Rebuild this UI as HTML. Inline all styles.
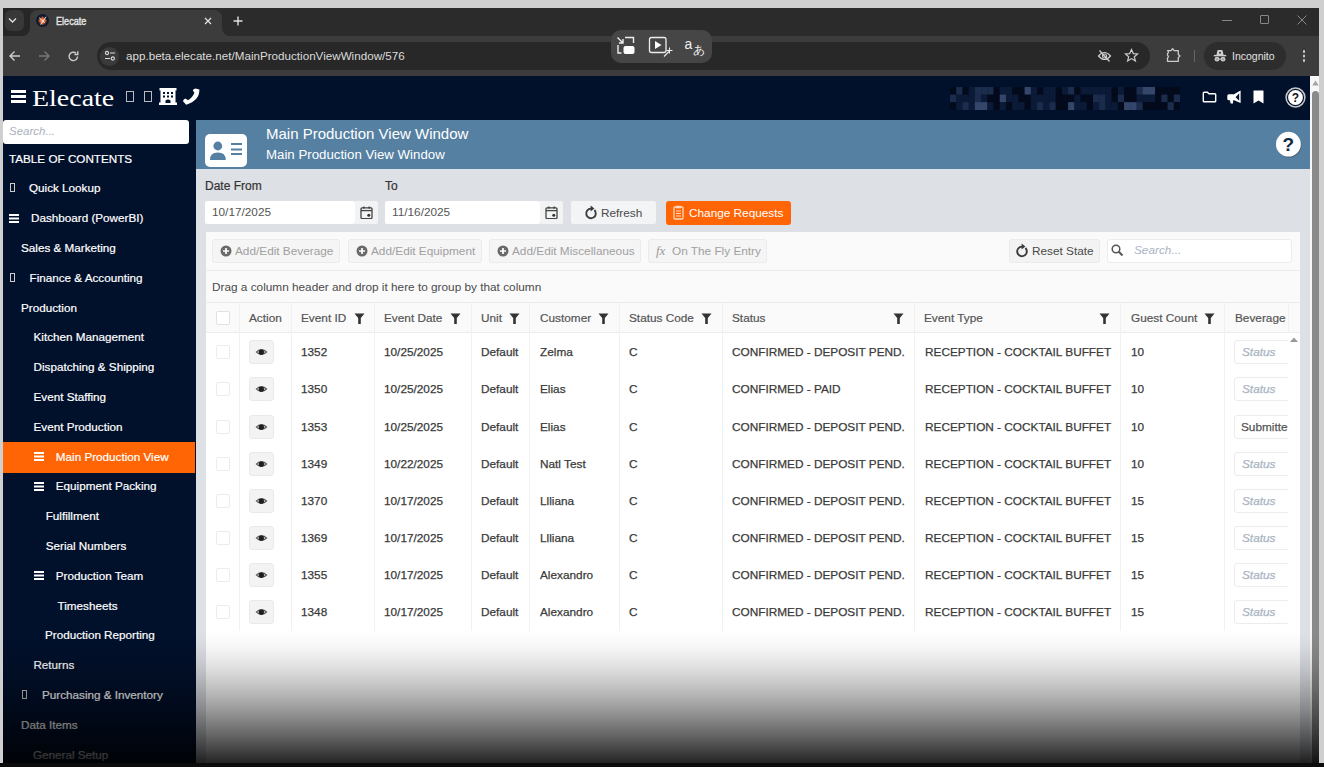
<!DOCTYPE html><html><head><meta charset="utf-8"><style>
*{box-sizing:border-box;margin:0;padding:0}
html,body{width:1324px;height:767px;overflow:hidden;background:#cfcfcf;font-family:"Liberation Sans",sans-serif}
.a{position:absolute}
.t{position:absolute;white-space:nowrap;line-height:1}
.ctext{color:#e3e3e3}
.si{position:absolute;white-space:nowrap;color:#fff;font-size:11.7px;line-height:14px;-webkit-text-stroke:0.2px currentColor}
.btn{position:absolute;background:#f5f5f5;border:1px solid #ebebeb;border-radius:3px;color:#a0a0a0;font-size:11.8px;white-space:nowrap}
.th{position:absolute;top:303px;height:30px;line-height:30px;font-size:11.8px;color:#555;white-space:nowrap;-webkit-text-stroke:0.2px currentColor}
.cell{position:absolute;font-size:11.8px;color:#3a3a3a;white-space:nowrap;line-height:14px;-webkit-text-stroke:0.25px currentColor}
.vl{position:absolute;width:1px;background:#f1f1f1}
#fade{left:3px;top:0;width:1316px;height:763px;pointer-events:none;background:linear-gradient(to bottom,rgba(0,0,0,0) 0px,rgba(0,0,0,0.000) 631.0px,rgba(0,0,0,0.027) 644.2px,rgba(0,0,0,0.077) 657.4px,rgba(0,0,0,0.141) 670.6px,rgba(0,0,0,0.218) 683.8px,rgba(0,0,0,0.304) 697.0px,rgba(0,0,0,0.400) 710.2px,rgba(0,0,0,0.504) 723.4px,rgba(0,0,0,0.615) 736.6px,rgba(0,0,0,0.734) 749.8px,rgba(0,0,0,0.860) 763.0px)}
</style></head><body>
<div class="a" style="left:3px;top:8px;width:1316px;height:28px;background:#2b2b2b"></div>
<div class="a" style="left:3px;top:8px;width:27px;height:28px;background:#262626;border-radius:0 0 8px 0"></div>
<div class="a" style="left:22px;top:28px;width:208px;height:8px;background:#3c3c3c"></div>
<div class="a" style="left:14px;top:20px;width:16px;height:16px;background:#262626;border-radius:0 0 8px 0"></div>
<div class="a" style="left:222px;top:20px;width:16px;height:16px;background:#2b2b2b;border-radius:0 0 0 8px"></div>
<div class="a" style="left:5px;top:10px;width:19px;height:21px;background:#383838;border-radius:6px"></div>
<svg class="a" style="left:7px;top:16px" width="11" height="8" viewBox="0 0 11 8"><path d="M2 2.5 L5.5 6 L9 2.5" stroke="#ddd" stroke-width="1.4" fill="none"/></svg>
<div class="a" style="left:30px;top:10px;width:192px;height:26px;background:#3c3c3c;border-radius:8px 8px 0 0"></div>
<svg class="a" style="left:36px;top:14px" width="13" height="13" viewBox="0 0 13 13"><defs><radialGradient id="fv"><stop offset="0" stop-color="#ffd0b0"/><stop offset="0.5" stop-color="#d8602a"/><stop offset="1" stop-color="#6a2010" stop-opacity="0"/></radialGradient></defs><circle cx="6.5" cy="6.5" r="6.5" fill="#0c1a30"/><circle cx="6.5" cy="6.8" r="5" fill="url(#fv)"/><path d="M6.5 1.8 L7.4 5.6 L11.2 6.8 L7.4 8 L6.5 11.8 L5.6 8 L1.8 6.8 L5.6 5.6 Z" fill="#e07040" opacity="0.8"/><path d="M10 2.8 L4.6 10.6 M3.2 3.8 L8.6 8.6" stroke="#eaf0ff" stroke-width="0.9"/></svg>
<div class="t ctext" style="left:56px;top:17px;font-size:10px;color:#e8e8e8;transform:scaleX(0.91);transform-origin:0 0;-webkit-text-stroke:0.35px currentColor">Elecate</div>
<svg class="a" style="left:204px;top:16.5px" width="8" height="8" viewBox="0 0 8 8"><path d="M1 1 L7 7 M7 1 L1 7" stroke="#e0e0e0" stroke-width="1.3"/></svg>
<svg class="a" style="left:233px;top:15.5px" width="10" height="10" viewBox="0 0 10 10"><path d="M5 0.5 V9.5 M0.5 5 H9.5" stroke="#e0e0e0" stroke-width="1.4"/></svg>
<div class="a" style="left:1222px;top:20px;width:10px;height:1px;background:#888"></div>
<div class="a" style="left:1260px;top:15px;width:9px;height:9px;border:1px solid #888;border-radius:1px"></div>
<svg class="a" style="left:1297px;top:15px" width="10" height="10" viewBox="0 0 10 10"><path d="M0.5 0.5 L9.5 9.5 M9.5 0.5 L0.5 9.5" stroke="#888" stroke-width="1"/></svg>
<div class="a" style="left:3px;top:36px;width:1316px;height:40px;background:#3c3c3c"></div>
<svg class="a" style="left:8px;top:50px" width="13" height="12" viewBox="0 0 13 12"><path d="M12 6 H2 M6.5 1.5 L2 6 L6.5 10.5" stroke="#ccc" stroke-width="1.4" fill="none"/></svg>
<svg class="a" style="left:38px;top:50px" width="13" height="12" viewBox="0 0 13 12"><path d="M1 6 H11 M6.5 1.5 L11 6 L6.5 10.5" stroke="#777" stroke-width="1.4" fill="none"/></svg>
<svg class="a" style="left:67px;top:50px" width="13" height="13" viewBox="0 0 13 13"><path d="M10.5 6.5 A4.2 4.2 0 1 1 9.2 3.4" stroke="#ccc" stroke-width="1.4" fill="none"/><path d="M10.8 1.2 V4.6 H7.4" stroke="#ccc" stroke-width="1.4" fill="none"/></svg>
<div class="a" style="left:97px;top:42px;width:1053px;height:28px;background:#282828;border-radius:14px"></div>
<div class="a" style="left:100px;top:46.5px;width:19px;height:19px;background:#3a3a3a;border-radius:10px"></div>
<svg class="a" style="left:104px;top:50px" width="12" height="12" viewBox="0 0 12 12"><path d="M6 3 H11 M1 8.5 H6" stroke="#ddd" stroke-width="1.2"/><circle cx="3" cy="3" r="1.6" stroke="#ddd" fill="none" stroke-width="1.1"/><circle cx="8.8" cy="8.5" r="1.6" stroke="#ddd" fill="none" stroke-width="1.1"/></svg>
<div class="t" style="left:126px;top:50px;font-size:11.65px;color:#dcdcdc">app.beta.elecate.net/MainProductionViewWindow/576</div>
<svg class="a" style="left:1097px;top:49px" width="15" height="14" viewBox="0 0 15 14"><path d="M1.5 7 Q7.5 0 13.5 7 Q7.5 14 1.5 7 Z" stroke="#ccc" stroke-width="1.2" fill="none"/><circle cx="7.5" cy="7" r="2" stroke="#ccc" stroke-width="1.2" fill="none"/><path d="M2.5 1.5 L12.5 12.5" stroke="#ccc" stroke-width="1.3"/></svg>
<svg class="a" style="left:1124px;top:48px" width="15" height="15" viewBox="0 0 15 15"><path d="M7.5 1.5 L9.3 5.6 L13.6 5.9 L10.3 8.7 L11.4 13 L7.5 10.6 L3.6 13 L4.7 8.7 L1.4 5.9 L5.7 5.6 Z" stroke="#ccc" stroke-width="1.2" fill="none"/></svg>
<svg class="a" style="left:1165px;top:47px" width="17" height="17" viewBox="0 0 17 17"><path d="M2.5 3.6 H6 L7.6 1.6 L9.2 3.6 H13.3 V7.4 L15 8.9 L13.3 10.4 V14.3 H2.5 V11 Q4.3 9.6 2.5 8.2 V6.6 Q4.3 5.2 2.5 3.6 Z" stroke="#ccc" stroke-width="1.3" fill="none" stroke-linejoin="round"/></svg>
<div class="a" style="left:1194px;top:50px;width:1px;height:12px;background:#666"></div>
<div class="a" style="left:1204px;top:42px;width:82px;height:28px;background:#2d2d2d;border-radius:14px"></div>
<svg class="a" style="left:1213px;top:49px" width="14" height="14" viewBox="0 0 14 14"><path d="M3.4 6.2 L4.4 1.6 Q4.6 1 5.3 1 H8.7 Q9.4 1 9.6 1.6 L10.6 6.2 Z" fill="#d0d0d0"/><circle cx="7" cy="3.8" r="1" fill="#3a3a3a"/><path d="M0.8 6.6 H13.2" stroke="#d0d0d0" stroke-width="1.4"/><circle cx="4" cy="10.2" r="2.4" fill="#c8c8c8"/><circle cx="10" cy="10.2" r="2.4" fill="#c8c8c8"/><path d="M6 10 H8" stroke="#c8c8c8" stroke-width="1.2"/><circle cx="4" cy="10.2" r="1" fill="#9a9a9a"/><circle cx="10" cy="10.2" r="1" fill="#9a9a9a"/></svg>
<div class="t ctext" style="left:1232px;top:51px;font-size:10.5px">Incognito</div>
<div class="a" style="left:1302.5px;top:50px;width:2.5px;height:2.5px;border-radius:2px;background:#ccc;box-shadow:0 4.5px 0 #ccc,0 9px 0 #ccc"></div>
<div class="a" style="left:611px;top:30px;width:101px;height:33px;background:#464646;border-radius:10px"></div>
<svg class="a" style="left:611px;top:30px" width="101" height="33" viewBox="0 0 101 33"><path d="M6.5 7.5 L12 13 M12 9 V13 H8" stroke="#eee" stroke-width="1.4" fill="none"/><path d="M14 7.5 H22.5 V13" stroke="#eee" stroke-width="1.4" fill="none"/><path d="M7 15 V23 H10.5" stroke="#eee" stroke-width="1.4" fill="none"/><rect x="12.5" y="16" width="11" height="8" rx="2" fill="#fff"/><rect x="38.5" y="7.5" width="16.5" height="15" rx="2" stroke="#eee" stroke-width="1.3" fill="none"/><path d="M44 11 V19 L50.5 15 Z" fill="#fff"/><path d="M53 26.5 L58 21.5" stroke="#eee" stroke-width="1.1"/><path d="M58.5 17.5 V23.5 M55.5 20.5 H61.5" stroke="#eee" stroke-width="1" fill="none"/><text x="73.5" y="18.5" font-family="Liberation Sans" font-size="14" fill="#eee">a</text><text x="82" y="24" font-family="Liberation Sans" font-size="12" fill="#eee">あ</text></svg>
<div class="a" style="left:3px;top:76px;width:1307px;height:44px;background:#01102b"></div>
<div class="a" style="left:11px;top:90px;width:15px;height:2.5px;background:#fff;box-shadow:0 5px 0 #fff,0 10px 0 #fff"></div>
<div class="t" style="left:32px;top:86px;font-family:'Liberation Serif',serif;font-size:24px;line-height:25px;color:#fff;transform:scaleX(1.165);transform-origin:0 0">Elecate</div>
<div class="a" style="left:126px;top:91px;width:8px;height:11px;border:1px solid #bbb"></div>
<div class="a" style="left:144px;top:91px;width:8px;height:11px;border:1px solid #bbb"></div>
<svg class="a" style="left:159px;top:88px" width="18" height="17" viewBox="0 0 18 17"><rect x="0.5" y="0" width="17" height="2.5" fill="#fff"/><rect x="1.5" y="2" width="15" height="13" fill="#fff"/><rect x="0" y="14.5" width="18" height="2.5" fill="#fff"/><rect x="4" y="4" width="2" height="2" fill="#01102b"/><rect x="8" y="4" width="2" height="2" fill="#01102b"/><rect x="12" y="4" width="2" height="2" fill="#01102b"/><rect x="4" y="7.5" width="2" height="2" fill="#01102b"/><rect x="8" y="7.5" width="2" height="2" fill="#01102b"/><rect x="12" y="7.5" width="2" height="2" fill="#01102b"/><path d="M6.5 15 V12.5 Q9 10.5 11.5 12.5 V15 Z" fill="#01102b"/></svg>
<svg class="a" style="left:182px;top:88px" width="18" height="17" viewBox="0 0 18 17"><path d="M1 13.2 Q1.2 11.2 3.5 10.6 L6 12.3 Q10.6 9.6 12.4 4.8 L10.8 2.6 Q11.2 0.6 13.4 0.4 L17.4 1.6 Q17.6 12.6 4.2 16.8 Z" fill="#fff"/></svg>
<svg class="a" style="left:949.5px;top:86.6px" width="230" height="23" viewBox="0 0 230 23"><rect x="0.00" y="0.00" width="6.52" height="7.9" fill="#030a1c"/><rect x="6.22" y="0.00" width="6.52" height="7.9" fill="#1c2c4c"/><rect x="12.43" y="0.00" width="6.52" height="7.9" fill="#030a1c"/><rect x="18.65" y="0.00" width="6.52" height="7.9" fill="#0b1a36"/><rect x="24.86" y="0.00" width="6.52" height="7.9" fill="#1c2c4c"/><rect x="31.08" y="0.00" width="6.52" height="7.9" fill="#1c2c4c"/><rect x="37.30" y="0.00" width="6.52" height="7.9" fill="#1c2c4c"/><rect x="43.51" y="0.00" width="6.52" height="7.9" fill="#030a1c"/><rect x="49.73" y="0.00" width="6.52" height="7.9" fill="#0b1a36"/><rect x="55.95" y="0.00" width="6.52" height="7.9" fill="#0b1a36"/><rect x="62.16" y="0.00" width="6.52" height="7.9" fill="#030a1c"/><rect x="68.38" y="0.00" width="6.52" height="7.9" fill="#030a1c"/><rect x="74.59" y="0.00" width="6.52" height="7.9" fill="#34476a"/><rect x="80.81" y="0.00" width="6.52" height="7.9" fill="#0b1a36"/><rect x="87.03" y="0.00" width="6.52" height="7.9" fill="#030a1c"/><rect x="93.24" y="0.00" width="6.52" height="7.9" fill="#0b1a36"/><rect x="99.46" y="0.00" width="6.52" height="7.9" fill="#0b1a36"/><rect x="105.68" y="0.00" width="6.52" height="7.9" fill="#030a1c"/><rect x="111.89" y="0.00" width="6.52" height="7.9" fill="#0b1a36"/><rect x="118.11" y="0.00" width="6.52" height="7.9" fill="#1c2c4c"/><rect x="124.32" y="0.00" width="6.52" height="7.9" fill="#030a1c"/><rect x="130.54" y="0.00" width="6.52" height="7.9" fill="#0b1a36"/><rect x="136.76" y="0.00" width="6.52" height="7.9" fill="#0b1a36"/><rect x="142.97" y="0.00" width="6.52" height="7.9" fill="#0b1a36"/><rect x="149.19" y="0.00" width="6.52" height="7.9" fill="#0b1a36"/><rect x="155.41" y="0.00" width="6.52" height="7.9" fill="#0b1a36"/><rect x="161.62" y="0.00" width="6.52" height="7.9" fill="#030a1c"/><rect x="167.84" y="0.00" width="6.52" height="7.9" fill="#0b1a36"/><rect x="174.05" y="0.00" width="6.52" height="7.9" fill="#030a1c"/><rect x="180.27" y="0.00" width="6.52" height="7.9" fill="#030a1c"/><rect x="186.49" y="0.00" width="6.52" height="7.9" fill="#1c2c4c"/><rect x="192.70" y="0.00" width="6.52" height="7.9" fill="#34476a"/><rect x="198.92" y="0.00" width="6.52" height="7.9" fill="#34476a"/><rect x="205.14" y="0.00" width="6.52" height="7.9" fill="#030a1c"/><rect x="211.35" y="0.00" width="6.52" height="7.9" fill="#030a1c"/><rect x="217.57" y="0.00" width="6.52" height="7.9" fill="#030a1c"/><rect x="223.78" y="0.00" width="6.52" height="7.9" fill="#030a1c"/><rect x="0.00" y="7.57" width="6.52" height="7.9" fill="#1c2c4c"/><rect x="6.22" y="7.57" width="6.52" height="7.9" fill="#0b1a36"/><rect x="12.43" y="7.57" width="6.52" height="7.9" fill="#0b1a36"/><rect x="18.65" y="7.57" width="6.52" height="7.9" fill="#0b1a36"/><rect x="24.86" y="7.57" width="6.52" height="7.9" fill="#1c2c4c"/><rect x="31.08" y="7.57" width="6.52" height="7.9" fill="#0b1a36"/><rect x="37.30" y="7.57" width="6.52" height="7.9" fill="#030a1c"/><rect x="43.51" y="7.57" width="6.52" height="7.9" fill="#030a1c"/><rect x="49.73" y="7.57" width="6.52" height="7.9" fill="#34476a"/><rect x="55.95" y="7.57" width="6.52" height="7.9" fill="#0b1a36"/><rect x="62.16" y="7.57" width="6.52" height="7.9" fill="#0b1a36"/><rect x="68.38" y="7.57" width="6.52" height="7.9" fill="#030a1c"/><rect x="74.59" y="7.57" width="6.52" height="7.9" fill="#030a1c"/><rect x="80.81" y="7.57" width="6.52" height="7.9" fill="#0b1a36"/><rect x="87.03" y="7.57" width="6.52" height="7.9" fill="#0b1a36"/><rect x="93.24" y="7.57" width="6.52" height="7.9" fill="#0b1a36"/><rect x="99.46" y="7.57" width="6.52" height="7.9" fill="#0b1a36"/><rect x="105.68" y="7.57" width="6.52" height="7.9" fill="#030a1c"/><rect x="111.89" y="7.57" width="6.52" height="7.9" fill="#030a1c"/><rect x="118.11" y="7.57" width="6.52" height="7.9" fill="#030a1c"/><rect x="124.32" y="7.57" width="6.52" height="7.9" fill="#0b1a36"/><rect x="130.54" y="7.57" width="6.52" height="7.9" fill="#030a1c"/><rect x="136.76" y="7.57" width="6.52" height="7.9" fill="#030a1c"/><rect x="142.97" y="7.57" width="6.52" height="7.9" fill="#1c2c4c"/><rect x="149.19" y="7.57" width="6.52" height="7.9" fill="#1c2c4c"/><rect x="155.41" y="7.57" width="6.52" height="7.9" fill="#0b1a36"/><rect x="161.62" y="7.57" width="6.52" height="7.9" fill="#030a1c"/><rect x="167.84" y="7.57" width="6.52" height="7.9" fill="#1c2c4c"/><rect x="174.05" y="7.57" width="6.52" height="7.9" fill="#030a1c"/><rect x="180.27" y="7.57" width="6.52" height="7.9" fill="#030a1c"/><rect x="186.49" y="7.57" width="6.52" height="7.9" fill="#0b1a36"/><rect x="192.70" y="7.57" width="6.52" height="7.9" fill="#0b1a36"/><rect x="198.92" y="7.57" width="6.52" height="7.9" fill="#0b1a36"/><rect x="205.14" y="7.57" width="6.52" height="7.9" fill="#030a1c"/><rect x="211.35" y="7.57" width="6.52" height="7.9" fill="#1c2c4c"/><rect x="217.57" y="7.57" width="6.52" height="7.9" fill="#030a1c"/><rect x="223.78" y="7.57" width="6.52" height="7.9" fill="#1c2c4c"/><rect x="0.00" y="15.14" width="6.52" height="7.9" fill="#030a1c"/><rect x="6.22" y="15.14" width="6.52" height="7.9" fill="#0b1a36"/><rect x="12.43" y="15.14" width="6.52" height="7.9" fill="#1c2c4c"/><rect x="18.65" y="15.14" width="6.52" height="7.9" fill="#0b1a36"/><rect x="24.86" y="15.14" width="6.52" height="7.9" fill="#34476a"/><rect x="31.08" y="15.14" width="6.52" height="7.9" fill="#34476a"/><rect x="37.30" y="15.14" width="6.52" height="7.9" fill="#0b1a36"/><rect x="43.51" y="15.14" width="6.52" height="7.9" fill="#030a1c"/><rect x="49.73" y="15.14" width="6.52" height="7.9" fill="#0b1a36"/><rect x="55.95" y="15.14" width="6.52" height="7.9" fill="#030a1c"/><rect x="62.16" y="15.14" width="6.52" height="7.9" fill="#0b1a36"/><rect x="68.38" y="15.14" width="6.52" height="7.9" fill="#0b1a36"/><rect x="74.59" y="15.14" width="6.52" height="7.9" fill="#030a1c"/><rect x="80.81" y="15.14" width="6.52" height="7.9" fill="#0b1a36"/><rect x="87.03" y="15.14" width="6.52" height="7.9" fill="#1c2c4c"/><rect x="93.24" y="15.14" width="6.52" height="7.9" fill="#0b1a36"/><rect x="99.46" y="15.14" width="6.52" height="7.9" fill="#1c2c4c"/><rect x="105.68" y="15.14" width="6.52" height="7.9" fill="#030a1c"/><rect x="111.89" y="15.14" width="6.52" height="7.9" fill="#030a1c"/><rect x="118.11" y="15.14" width="6.52" height="7.9" fill="#34476a"/><rect x="124.32" y="15.14" width="6.52" height="7.9" fill="#0b1a36"/><rect x="130.54" y="15.14" width="6.52" height="7.9" fill="#0b1a36"/><rect x="136.76" y="15.14" width="6.52" height="7.9" fill="#030a1c"/><rect x="142.97" y="15.14" width="6.52" height="7.9" fill="#0b1a36"/><rect x="149.19" y="15.14" width="6.52" height="7.9" fill="#1c2c4c"/><rect x="155.41" y="15.14" width="6.52" height="7.9" fill="#0b1a36"/><rect x="161.62" y="15.14" width="6.52" height="7.9" fill="#0b1a36"/><rect x="167.84" y="15.14" width="6.52" height="7.9" fill="#030a1c"/><rect x="174.05" y="15.14" width="6.52" height="7.9" fill="#34476a"/><rect x="180.27" y="15.14" width="6.52" height="7.9" fill="#34476a"/><rect x="186.49" y="15.14" width="6.52" height="7.9" fill="#1c2c4c"/><rect x="192.70" y="15.14" width="6.52" height="7.9" fill="#030a1c"/><rect x="198.92" y="15.14" width="6.52" height="7.9" fill="#030a1c"/><rect x="205.14" y="15.14" width="6.52" height="7.9" fill="#030a1c"/><rect x="211.35" y="15.14" width="6.52" height="7.9" fill="#030a1c"/><rect x="217.57" y="15.14" width="6.52" height="7.9" fill="#1c2c4c"/><rect x="223.78" y="15.14" width="6.52" height="7.9" fill="#030a1c"/></svg>
<svg class="a" style="left:1201.5px;top:91px" width="15" height="12" viewBox="0 0 15 12"><path d="M1.3 2 Q1.3 1.2 2.1 1.2 H5.4 L6.9 2.7 H12.9 Q13.7 2.7 13.7 3.5 V10 Q13.7 10.8 12.9 10.8 H2.1 Q1.3 10.8 1.3 10 Z" stroke="#fff" stroke-width="1.4" fill="none"/></svg>
<svg class="a" style="left:1227px;top:90px" width="15" height="14" viewBox="0 0 15 14"><rect x="0.3" y="4.2" width="7.5" height="6" rx="1.5" fill="#fff"/><path d="M2.8 9.5 H6.2 L6 13.4 H3.6 Z" fill="#fff"/><path d="M7 4.2 L13.6 0.6 V13 L7 10.2 Z" fill="#fff"/><path d="M8.6 7.2 L12.2 3.2 V10.8 Z" fill="#01102b"/></svg>
<svg class="a" style="left:1253px;top:90px" width="11" height="14" viewBox="0 0 11 14"><path d="M0.5 0.8 Q0.5 0.4 1 0.4 H10 Q10.5 0.4 10.5 0.8 V13.5 L5.5 10.6 L0.5 13.5 Z" fill="#fff"/></svg>
<svg class="a" style="left:1285px;top:86.5px" width="21" height="21" viewBox="0 0 21 21"><circle cx="10.5" cy="10.5" r="9.4" stroke="#c8c8c8" stroke-width="1.5" fill="#01102b"/><circle cx="10.5" cy="10.5" r="7.4" fill="#fff"/><text x="10.5" y="14.8" text-anchor="middle" font-family="Liberation Sans" font-weight="bold" font-size="12" fill="#111">?</text></svg>
<div class="a" style="left:1310px;top:76px;width:9px;height:687px;background:#f7f7f7"></div>
<svg class="a" style="left:1311px;top:78px" width="9" height="9" viewBox="0 0 9 9"><path d="M1.3 7.5 L4.5 2.5 L7.7 7.5 Z" fill="#a3a3a3"/></svg>
<div class="a" style="left:1312px;top:90.5px;width:7px;height:680px;background:#8a8a8a;border-radius:3.5px"></div>
<div class="a" style="left:3px;top:120px;width:193px;height:643px;background:#01102b"></div>
<div class="a" style="left:3px;top:120px;width:186px;height:24px;background:#fff;border-radius:3px"></div>
<div class="t" style="left:9px;top:126px;font-size:11.5px;font-style:italic;color:#a9b1bd">Search...</div>
<div class="si" style="left:9px;top:152px">TABLE OF CONTENTS</div>
<div class="a" style="left:3px;top:442px;width:191.5px;height:30.5px;background:#ff6505"></div>
<div class="si" style="left:29px;top:181.3px">Quick Lookup</div>
<div class="a" style="left:10px;top:183px;width:5px;height:9px;border:1px solid #ccc"></div>
<div class="si" style="left:31px;top:211.1px">Dashboard (PowerBI)</div>
<div class="a" style="left:9px;top:214px;width:10px;height:2px;background:#fff;box-shadow:0 3.5px 0 #fff,0 7px 0 #fff"></div>
<div class="si" style="left:21px;top:240.9px">Sales &amp; Marketing</div>
<div class="si" style="left:29.5px;top:270.7px">Finance &amp; Accounting</div>
<div class="a" style="left:10px;top:273px;width:5px;height:9px;border:1px solid #ccc"></div>
<div class="si" style="left:21px;top:300.5px">Production</div>
<div class="si" style="left:33.5px;top:330.3px">Kitchen Management</div>
<div class="si" style="left:33.5px;top:360.1px">Dispatching &amp; Shipping</div>
<div class="si" style="left:33.5px;top:389.9px">Event Staffing</div>
<div class="si" style="left:33.5px;top:419.7px">Event Production</div>
<div class="si" style="left:55.8px;top:449.5px">Main Production View</div>
<div class="a" style="left:33.5px;top:452px;width:10px;height:2px;background:#fff;box-shadow:0 3.5px 0 #fff,0 7px 0 #fff"></div>
<div class="si" style="left:55.8px;top:479.3px">Equipment Packing</div>
<div class="a" style="left:33.5px;top:482px;width:10px;height:2px;background:#fff;box-shadow:0 3.5px 0 #fff,0 7px 0 #fff"></div>
<div class="si" style="left:45.7px;top:509.1px">Fulfillment</div>
<div class="si" style="left:45.7px;top:538.9px">Serial Numbers</div>
<div class="si" style="left:55.8px;top:568.7px">Production Team</div>
<div class="a" style="left:33.5px;top:571px;width:10px;height:2px;background:#fff;box-shadow:0 3.5px 0 #fff,0 7px 0 #fff"></div>
<div class="si" style="left:57.5px;top:598.5px">Timesheets</div>
<div class="si" style="left:45px;top:628.3px">Production Reporting</div>
<div class="si" style="left:33.4px;top:658.1px">Returns</div>
<div class="si" style="left:42px;top:687.9px">Purchasing &amp; Inventory</div>
<div class="a" style="left:22px;top:690px;width:5px;height:9px;border:1px solid #ccc"></div>
<div class="si" style="left:21px;top:717.7px">Data Items</div>
<div class="si" style="left:33px;top:747.5px">General Setup</div>
<div class="a" style="left:196px;top:120px;width:1114px;height:643px;background:#dde0e5"></div>
<div class="a" style="left:196px;top:120px;width:1114px;height:49px;background:#5580a2"></div>
<div class="a" style="left:205px;top:134px;width:42px;height:33px;background:#fff;border-radius:5px"></div>
<svg class="a" style="left:205px;top:134px" width="42" height="33" viewBox="0 0 42 33"><circle cx="12.8" cy="12" r="4.4" fill="#5580a2"/><path d="M5 26 Q5 18.6 12.8 18.6 Q20.8 18.6 20.8 26 Z" fill="#5580a2"/><rect x="26" y="9" width="11" height="2" fill="#5580a2"/><rect x="26" y="14.5" width="11" height="2" fill="#5580a2"/><rect x="26" y="19" width="11" height="2" fill="#5580a2"/></svg>
<div class="t" style="left:266px;top:126px;font-size:15px;color:#fff">Main Production View Window</div>
<div class="t" style="left:266px;top:148px;font-size:13.25px;color:#fff">Main Production View Window</div>
<svg class="a" style="left:1275px;top:131px" width="28" height="28" viewBox="0 0 28 28"><circle cx="14.2" cy="14.2" r="12.3" fill="#3a4a58" opacity="0.5"/><circle cx="13.4" cy="13.2" r="12.4" fill="#fff"/><text x="13.4" y="20" text-anchor="middle" font-family="Liberation Sans" font-weight="bold" font-size="19" fill="#0e2a47">?</text></svg>
<div class="t" style="left:205px;top:180px;font-size:12px;color:#333;-webkit-text-stroke:0.2px currentColor">Date From</div>
<div class="t" style="left:385px;top:180px;font-size:12px;color:#333;-webkit-text-stroke:0.2px currentColor">To</div>
<div class="a" style="left:205px;top:201px;width:150px;height:23px;background:#fff;border-radius:2px"></div>
<div class="a" style="left:355px;top:201px;width:23px;height:23px;background:#f2f3f4;border-radius:0 2px 2px 0"></div>
<svg class="a" style="left:360px;top:206px" width="13" height="13" viewBox="0 0 13 13"><rect x="1" y="1.8" width="11" height="10.8" rx="1" stroke="#444" stroke-width="1.3" fill="none"/><path d="M1 4.6 H12" stroke="#444" stroke-width="1.3"/><circle cx="3.8" cy="1.6" r="1.1" fill="#444"/><circle cx="9.2" cy="1.6" r="1.1" fill="#444"/><circle cx="8.8" cy="9.2" r="1.5" fill="#333"/></svg>
<div class="t" style="left:212px;top:207px;font-size:11.8px;color:#555">10/17/2025</div>
<div class="a" style="left:385px;top:201px;width:155px;height:23px;background:#fff;border-radius:2px"></div>
<div class="a" style="left:540px;top:201px;width:23px;height:23px;background:#f2f3f4;border-radius:0 2px 2px 0"></div>
<svg class="a" style="left:545px;top:206px" width="13" height="13" viewBox="0 0 13 13"><rect x="1" y="1.8" width="11" height="10.8" rx="1" stroke="#444" stroke-width="1.3" fill="none"/><path d="M1 4.6 H12" stroke="#444" stroke-width="1.3"/><circle cx="3.8" cy="1.6" r="1.1" fill="#444"/><circle cx="9.2" cy="1.6" r="1.1" fill="#444"/><circle cx="8.8" cy="9.2" r="1.5" fill="#333"/></svg>
<div class="t" style="left:392px;top:207px;font-size:11.8px;color:#555">11/16/2025</div>
<div class="a" style="left:571px;top:201px;width:85px;height:23px;background:#f3f4f5;border-radius:2px"></div>
<svg class="a" style="left:584px;top:205px" width="14" height="15" viewBox="0 0 14 15"><path d="M10.4 5 A4.8 4.8 0 1 1 7 3.6" stroke="#3a3a3a" stroke-width="1.9" fill="none"/><path d="M6.6 0.6 L10.4 3.6 L6.6 6.6 Z" fill="#3a3a3a"/></svg>
<div class="t" style="left:601px;top:208px;font-size:11.8px;color:#4a4a4a">Refresh</div>
<div class="a" style="left:666px;top:201px;width:125px;height:24px;background:#ff6505;border-radius:3px"></div>
<svg class="a" style="left:673px;top:205px" width="11" height="15" viewBox="0 0 11 15"><rect x="1" y="2" width="9" height="12" rx="1" stroke="#ffd9bf" stroke-width="1.3" fill="none"/><rect x="3" y="0.8" width="5" height="2.5" fill="#ffd9bf"/><path d="M3 6 H8 M3 8.5 H8 M3 11 H8" stroke="#ffd9bf" stroke-width="1"/></svg>
<div class="t" style="left:689px;top:208px;font-size:11.8px;color:#fff">Change Requests</div>
<div class="a" style="left:206px;top:232px;width:1094px;height:531px;background:#fff"></div>
<div class="a" style="left:206px;top:232px;width:1094px;height:39px;background:#fafafa;border-bottom:1px solid #ececec"></div>
<div class="a" style="left:206px;top:271px;width:1094px;height:32px;background:#fafafa;border-bottom:1px solid #ececec"></div>
<div class="btn" style="left:212px;top:239px;width:128px;height:24px"></div>
<svg class="a" style="left:220px;top:245px" width="12" height="12" viewBox="0 0 12 12"><circle cx="6" cy="6" r="5.5" fill="#6a6a6a"/><path d="M6 3 V9 M3 6 H9" stroke="#fff" stroke-width="1.7"/></svg>
<div class="t" style="left:235px;top:246px;font-size:11.8px;color:#a0a0a0">Add/Edit Beverage</div>
<div class="btn" style="left:348px;top:239px;width:134px;height:24px"></div>
<svg class="a" style="left:356px;top:245px" width="12" height="12" viewBox="0 0 12 12"><circle cx="6" cy="6" r="5.5" fill="#6a6a6a"/><path d="M6 3 V9 M3 6 H9" stroke="#fff" stroke-width="1.7"/></svg>
<div class="t" style="left:371px;top:246px;font-size:11.8px;color:#a0a0a0">Add/Edit Equipment</div>
<div class="btn" style="left:489px;top:239px;width:152px;height:24px"></div>
<svg class="a" style="left:497px;top:245px" width="12" height="12" viewBox="0 0 12 12"><circle cx="6" cy="6" r="5.5" fill="#6a6a6a"/><path d="M6 3 V9 M3 6 H9" stroke="#fff" stroke-width="1.7"/></svg>
<div class="t" style="left:512px;top:246px;font-size:11.8px;color:#a0a0a0">Add/Edit Miscellaneous</div>
<div class="btn" style="left:648px;top:239px;width:119px;height:24px"></div>
<div class="t" style="left:656px;top:244px;font-size:13px;font-family:'Liberation Serif',serif;font-style:italic;color:#999">fx</div>
<div class="t" style="left:672px;top:246px;font-size:11.8px;color:#a0a0a0">On The Fly Entry</div>
<div class="btn" style="left:1009px;top:239px;width:91px;height:24px;background:#f3f3f3"></div>
<svg class="a" style="left:1015px;top:243px" width="14" height="15" viewBox="0 0 14 15"><path d="M10.4 5 A4.8 4.8 0 1 1 7 3.6" stroke="#3a3a3a" stroke-width="1.9" fill="none"/><path d="M6.6 0.6 L10.4 3.6 L6.6 6.6 Z" fill="#3a3a3a"/></svg>
<div class="t" style="left:1032px;top:245.5px;font-size:11.8px;color:#4a4a4a">Reset State</div>
<div class="a" style="left:1107px;top:239px;width:185px;height:24px;background:#fff;border:1px solid #ececec;border-radius:3px"></div>
<svg class="a" style="left:1111px;top:244px" width="13" height="13" viewBox="0 0 13 13"><circle cx="5" cy="5" r="3.8" stroke="#555" stroke-width="1.5" fill="none"/><path d="M7.8 7.8 L11.5 11.5" stroke="#555" stroke-width="2"/></svg>
<div class="t" style="left:1134px;top:245px;font-size:11.8px;font-style:italic;color:#a9b4c2">Search...</div>
<div class="t" style="left:212px;top:281.5px;font-size:11.8px;color:#4a4a4a">Drag a column header and drop it here to group by that column</div>
<div class="a" style="left:206px;top:303px;width:1094px;height:30px;background:#fafafa;border-bottom:1px solid #ececec"></div>
<div class="vl" style="left:239px;top:303px;height:328px"></div>
<div class="vl" style="left:291px;top:303px;height:328px"></div>
<div class="vl" style="left:374px;top:303px;height:328px"></div>
<div class="vl" style="left:471px;top:303px;height:328px"></div>
<div class="vl" style="left:529px;top:303px;height:328px"></div>
<div class="vl" style="left:619px;top:303px;height:328px"></div>
<div class="vl" style="left:722px;top:303px;height:328px"></div>
<div class="vl" style="left:914px;top:303px;height:328px"></div>
<div class="vl" style="left:1120px;top:303px;height:328px"></div>
<div class="vl" style="left:1224px;top:303px;height:328px"></div>
<div class="vl" style="left:1288px;top:303px;height:328px"></div>
<div class="th" style="left:249px">Action</div>
<div class="th" style="left:301px">Event ID</div>
<svg class="a" style="left:353.5px;top:312.5px" width="11" height="12" viewBox="0 0 11 12"><path d="M0.5 0.5 H10.5 L6.8 5 V11 H4.2 V5 Z" fill="#333"/></svg>
<div class="th" style="left:384px">Event Date</div>
<svg class="a" style="left:449.5px;top:312.5px" width="11" height="12" viewBox="0 0 11 12"><path d="M0.5 0.5 H10.5 L6.8 5 V11 H4.2 V5 Z" fill="#333"/></svg>
<div class="th" style="left:481px">Unit</div>
<svg class="a" style="left:508.5px;top:312.5px" width="11" height="12" viewBox="0 0 11 12"><path d="M0.5 0.5 H10.5 L6.8 5 V11 H4.2 V5 Z" fill="#333"/></svg>
<div class="th" style="left:540px">Customer</div>
<svg class="a" style="left:597.5px;top:312.5px" width="11" height="12" viewBox="0 0 11 12"><path d="M0.5 0.5 H10.5 L6.8 5 V11 H4.2 V5 Z" fill="#333"/></svg>
<div class="th" style="left:629px">Status Code</div>
<svg class="a" style="left:700.5px;top:312.5px" width="11" height="12" viewBox="0 0 11 12"><path d="M0.5 0.5 H10.5 L6.8 5 V11 H4.2 V5 Z" fill="#333"/></svg>
<div class="th" style="left:732px">Status</div>
<svg class="a" style="left:892.5px;top:312.5px" width="11" height="12" viewBox="0 0 11 12"><path d="M0.5 0.5 H10.5 L6.8 5 V11 H4.2 V5 Z" fill="#333"/></svg>
<div class="th" style="left:924px">Event Type</div>
<svg class="a" style="left:1098.5px;top:312.5px" width="11" height="12" viewBox="0 0 11 12"><path d="M0.5 0.5 H10.5 L6.8 5 V11 H4.2 V5 Z" fill="#333"/></svg>
<div class="th" style="left:1131px">Guest Count</div>
<svg class="a" style="left:1203.5px;top:312.5px" width="11" height="12" viewBox="0 0 11 12"><path d="M0.5 0.5 H10.5 L6.8 5 V11 H4.2 V5 Z" fill="#333"/></svg>
<div class="th" style="left:1235px">Beverage</div>
<div class="a" style="left:216px;top:311px;width:14px;height:14px;border:1px solid #e2e2e2;border-radius:2px;background:#fff"></div>
<div class="a" style="left:216px;top:345.3px;width:14px;height:14px;border:1px solid #ececec;border-radius:2px;background:#fff"></div>
<div class="a" style="left:249px;top:340.3px;width:25px;height:24px;background:#f3f3f3;border:1px solid #eaeaea;border-radius:3px"></div>
<svg class="a" style="left:255px;top:348.3px" width="13" height="8" viewBox="0 0 13 8"><path d="M0.5 4 Q6.5 -2.2 12.5 4 Q6.5 10.2 0.5 4 Z" fill="#555"/><circle cx="6.3" cy="4.2" r="2.6" fill="#1f1f1f"/><circle cx="3.2" cy="4" r="0.8" fill="#ddd"/><circle cx="9.6" cy="4" r="0.8" fill="#ddd"/></svg>
<div class="cell" style="left:301px;top:345.3px">1352</div>
<div class="cell" style="left:384px;top:345.3px">10/25/2025</div>
<div class="cell" style="left:481px;top:345.3px">Default</div>
<div class="cell" style="left:540px;top:345.3px">Zelma</div>
<div class="cell" style="left:629px;top:345.3px">C</div>
<div class="cell" style="left:732px;top:345.3px">CONFIRMED - DEPOSIT PEND.</div>
<div class="cell" style="left:925px;top:345.3px">RECEPTION - COCKTAIL BUFFET</div>
<div class="cell" style="left:1131px;top:345.3px">10</div>
<div class="a" style="left:1234px;top:340.3px;width:60px;height:24px;border:1px solid #ececec;border-radius:3px;background:#fff"></div>
<div class="cell" style="left:1242px;top:345.3px;font-style:italic;color:#a9b4c2">Status</div>
<div class="a" style="left:216px;top:382.4px;width:14px;height:14px;border:1px solid #ececec;border-radius:2px;background:#fff"></div>
<div class="a" style="left:249px;top:377.4px;width:25px;height:24px;background:#f3f3f3;border:1px solid #eaeaea;border-radius:3px"></div>
<svg class="a" style="left:255px;top:385.4px" width="13" height="8" viewBox="0 0 13 8"><path d="M0.5 4 Q6.5 -2.2 12.5 4 Q6.5 10.2 0.5 4 Z" fill="#555"/><circle cx="6.3" cy="4.2" r="2.6" fill="#1f1f1f"/><circle cx="3.2" cy="4" r="0.8" fill="#ddd"/><circle cx="9.6" cy="4" r="0.8" fill="#ddd"/></svg>
<div class="cell" style="left:301px;top:382.4px">1350</div>
<div class="cell" style="left:384px;top:382.4px">10/25/2025</div>
<div class="cell" style="left:481px;top:382.4px">Default</div>
<div class="cell" style="left:540px;top:382.4px">Elias</div>
<div class="cell" style="left:629px;top:382.4px">C</div>
<div class="cell" style="left:732px;top:382.4px">CONFIRMED - PAID</div>
<div class="cell" style="left:925px;top:382.4px">RECEPTION - COCKTAIL BUFFET</div>
<div class="cell" style="left:1131px;top:382.4px">10</div>
<div class="a" style="left:1234px;top:377.4px;width:60px;height:24px;border:1px solid #ececec;border-radius:3px;background:#fff"></div>
<div class="cell" style="left:1242px;top:382.4px;font-style:italic;color:#a9b4c2">Status</div>
<div class="a" style="left:216px;top:419.5px;width:14px;height:14px;border:1px solid #ececec;border-radius:2px;background:#fff"></div>
<div class="a" style="left:249px;top:414.5px;width:25px;height:24px;background:#f3f3f3;border:1px solid #eaeaea;border-radius:3px"></div>
<svg class="a" style="left:255px;top:422.5px" width="13" height="8" viewBox="0 0 13 8"><path d="M0.5 4 Q6.5 -2.2 12.5 4 Q6.5 10.2 0.5 4 Z" fill="#555"/><circle cx="6.3" cy="4.2" r="2.6" fill="#1f1f1f"/><circle cx="3.2" cy="4" r="0.8" fill="#ddd"/><circle cx="9.6" cy="4" r="0.8" fill="#ddd"/></svg>
<div class="cell" style="left:301px;top:419.5px">1353</div>
<div class="cell" style="left:384px;top:419.5px">10/25/2025</div>
<div class="cell" style="left:481px;top:419.5px">Default</div>
<div class="cell" style="left:540px;top:419.5px">Elias</div>
<div class="cell" style="left:629px;top:419.5px">C</div>
<div class="cell" style="left:732px;top:419.5px">CONFIRMED - DEPOSIT PEND.</div>
<div class="cell" style="left:925px;top:419.5px">RECEPTION - COCKTAIL BUFFET</div>
<div class="cell" style="left:1131px;top:419.5px">10</div>
<div class="a" style="left:1234px;top:414.5px;width:60px;height:24px;border:1px solid #ececec;border-radius:3px;background:#fff"></div>
<div class="cell" style="left:1241px;top:419.5px;color:#555">Submitte</div>
<div class="a" style="left:216px;top:456.6px;width:14px;height:14px;border:1px solid #ececec;border-radius:2px;background:#fff"></div>
<div class="a" style="left:249px;top:451.6px;width:25px;height:24px;background:#f3f3f3;border:1px solid #eaeaea;border-radius:3px"></div>
<svg class="a" style="left:255px;top:459.6px" width="13" height="8" viewBox="0 0 13 8"><path d="M0.5 4 Q6.5 -2.2 12.5 4 Q6.5 10.2 0.5 4 Z" fill="#555"/><circle cx="6.3" cy="4.2" r="2.6" fill="#1f1f1f"/><circle cx="3.2" cy="4" r="0.8" fill="#ddd"/><circle cx="9.6" cy="4" r="0.8" fill="#ddd"/></svg>
<div class="cell" style="left:301px;top:456.6px">1349</div>
<div class="cell" style="left:384px;top:456.6px">10/22/2025</div>
<div class="cell" style="left:481px;top:456.6px">Default</div>
<div class="cell" style="left:540px;top:456.6px">Natl Test</div>
<div class="cell" style="left:629px;top:456.6px">C</div>
<div class="cell" style="left:732px;top:456.6px">CONFIRMED - DEPOSIT PEND.</div>
<div class="cell" style="left:925px;top:456.6px">RECEPTION - COCKTAIL BUFFET</div>
<div class="cell" style="left:1131px;top:456.6px">10</div>
<div class="a" style="left:1234px;top:451.6px;width:60px;height:24px;border:1px solid #ececec;border-radius:3px;background:#fff"></div>
<div class="cell" style="left:1242px;top:456.6px;font-style:italic;color:#a9b4c2">Status</div>
<div class="a" style="left:216px;top:493.7px;width:14px;height:14px;border:1px solid #ececec;border-radius:2px;background:#fff"></div>
<div class="a" style="left:249px;top:488.7px;width:25px;height:24px;background:#f3f3f3;border:1px solid #eaeaea;border-radius:3px"></div>
<svg class="a" style="left:255px;top:496.7px" width="13" height="8" viewBox="0 0 13 8"><path d="M0.5 4 Q6.5 -2.2 12.5 4 Q6.5 10.2 0.5 4 Z" fill="#555"/><circle cx="6.3" cy="4.2" r="2.6" fill="#1f1f1f"/><circle cx="3.2" cy="4" r="0.8" fill="#ddd"/><circle cx="9.6" cy="4" r="0.8" fill="#ddd"/></svg>
<div class="cell" style="left:301px;top:493.7px">1370</div>
<div class="cell" style="left:384px;top:493.7px">10/17/2025</div>
<div class="cell" style="left:481px;top:493.7px">Default</div>
<div class="cell" style="left:540px;top:493.7px">Llliana</div>
<div class="cell" style="left:629px;top:493.7px">C</div>
<div class="cell" style="left:732px;top:493.7px">CONFIRMED - DEPOSIT PEND.</div>
<div class="cell" style="left:925px;top:493.7px">RECEPTION - COCKTAIL BUFFET</div>
<div class="cell" style="left:1131px;top:493.7px">15</div>
<div class="a" style="left:1234px;top:488.7px;width:60px;height:24px;border:1px solid #ececec;border-radius:3px;background:#fff"></div>
<div class="cell" style="left:1242px;top:493.7px;font-style:italic;color:#a9b4c2">Status</div>
<div class="a" style="left:216px;top:530.8px;width:14px;height:14px;border:1px solid #ececec;border-radius:2px;background:#fff"></div>
<div class="a" style="left:249px;top:525.8px;width:25px;height:24px;background:#f3f3f3;border:1px solid #eaeaea;border-radius:3px"></div>
<svg class="a" style="left:255px;top:533.8px" width="13" height="8" viewBox="0 0 13 8"><path d="M0.5 4 Q6.5 -2.2 12.5 4 Q6.5 10.2 0.5 4 Z" fill="#555"/><circle cx="6.3" cy="4.2" r="2.6" fill="#1f1f1f"/><circle cx="3.2" cy="4" r="0.8" fill="#ddd"/><circle cx="9.6" cy="4" r="0.8" fill="#ddd"/></svg>
<div class="cell" style="left:301px;top:530.8px">1369</div>
<div class="cell" style="left:384px;top:530.8px">10/17/2025</div>
<div class="cell" style="left:481px;top:530.8px">Default</div>
<div class="cell" style="left:540px;top:530.8px">Llliana</div>
<div class="cell" style="left:629px;top:530.8px">C</div>
<div class="cell" style="left:732px;top:530.8px">CONFIRMED - DEPOSIT PEND.</div>
<div class="cell" style="left:925px;top:530.8px">RECEPTION - COCKTAIL BUFFET</div>
<div class="cell" style="left:1131px;top:530.8px">15</div>
<div class="a" style="left:1234px;top:525.8px;width:60px;height:24px;border:1px solid #ececec;border-radius:3px;background:#fff"></div>
<div class="cell" style="left:1242px;top:530.8px;font-style:italic;color:#a9b4c2">Status</div>
<div class="a" style="left:216px;top:567.9px;width:14px;height:14px;border:1px solid #ececec;border-radius:2px;background:#fff"></div>
<div class="a" style="left:249px;top:562.9px;width:25px;height:24px;background:#f3f3f3;border:1px solid #eaeaea;border-radius:3px"></div>
<svg class="a" style="left:255px;top:570.9px" width="13" height="8" viewBox="0 0 13 8"><path d="M0.5 4 Q6.5 -2.2 12.5 4 Q6.5 10.2 0.5 4 Z" fill="#555"/><circle cx="6.3" cy="4.2" r="2.6" fill="#1f1f1f"/><circle cx="3.2" cy="4" r="0.8" fill="#ddd"/><circle cx="9.6" cy="4" r="0.8" fill="#ddd"/></svg>
<div class="cell" style="left:301px;top:567.9px">1355</div>
<div class="cell" style="left:384px;top:567.9px">10/17/2025</div>
<div class="cell" style="left:481px;top:567.9px">Default</div>
<div class="cell" style="left:540px;top:567.9px">Alexandro</div>
<div class="cell" style="left:629px;top:567.9px">C</div>
<div class="cell" style="left:732px;top:567.9px">CONFIRMED - DEPOSIT PEND.</div>
<div class="cell" style="left:925px;top:567.9px">RECEPTION - COCKTAIL BUFFET</div>
<div class="cell" style="left:1131px;top:567.9px">15</div>
<div class="a" style="left:1234px;top:562.9px;width:60px;height:24px;border:1px solid #ececec;border-radius:3px;background:#fff"></div>
<div class="cell" style="left:1242px;top:567.9px;font-style:italic;color:#a9b4c2">Status</div>
<div class="a" style="left:216px;top:605.0px;width:14px;height:14px;border:1px solid #ececec;border-radius:2px;background:#fff"></div>
<div class="a" style="left:249px;top:600.0px;width:25px;height:24px;background:#f3f3f3;border:1px solid #eaeaea;border-radius:3px"></div>
<svg class="a" style="left:255px;top:608.0px" width="13" height="8" viewBox="0 0 13 8"><path d="M0.5 4 Q6.5 -2.2 12.5 4 Q6.5 10.2 0.5 4 Z" fill="#555"/><circle cx="6.3" cy="4.2" r="2.6" fill="#1f1f1f"/><circle cx="3.2" cy="4" r="0.8" fill="#ddd"/><circle cx="9.6" cy="4" r="0.8" fill="#ddd"/></svg>
<div class="cell" style="left:301px;top:605.0px">1348</div>
<div class="cell" style="left:384px;top:605.0px">10/17/2025</div>
<div class="cell" style="left:481px;top:605.0px">Default</div>
<div class="cell" style="left:540px;top:605.0px">Alexandro</div>
<div class="cell" style="left:629px;top:605.0px">C</div>
<div class="cell" style="left:732px;top:605.0px">CONFIRMED - DEPOSIT PEND.</div>
<div class="cell" style="left:925px;top:605.0px">RECEPTION - COCKTAIL BUFFET</div>
<div class="cell" style="left:1131px;top:605.0px">15</div>
<div class="a" style="left:1234px;top:600.0px;width:60px;height:24px;border:1px solid #ececec;border-radius:3px;background:#fff"></div>
<div class="cell" style="left:1242px;top:605.0px;font-style:italic;color:#a9b4c2">Status</div>
<div class="a" style="left:1288px;top:333px;width:12px;height:430px;background:#fff"></div>
<svg class="a" style="left:1288px;top:336px" width="12" height="8" viewBox="0 0 12 8"><path d="M2 6 L6 1.5 L10 6 Z" fill="#999"/></svg>
<div class="a" style="left:0;top:763px;width:1324px;height:4px;background:#0c0c0c"></div>
<div class="a" id="fade"></div>
</body></html>
